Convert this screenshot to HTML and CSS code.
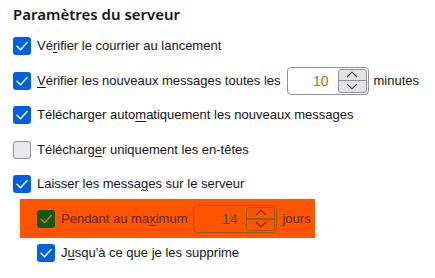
FILE: index.html
```html
<!DOCTYPE html>
<html lang="fr">
<head>
<meta charset="utf-8">
<link rel="stylesheet" href="styles.css">
</head>
<body>
<div class="panel">
  <h1 class="title">Paramètres du serveur</h1>
  <div class="row">
    <span class="cb on"><svg viewBox="0 0 18 18"><path d="M4 9.3 L7.6 12.8 L14.2 5.4"/></svg></span>
    <span class="label">Vé<u>r</u>ifier le courrier au lancement</span>
  </div>
  <div class="row">
    <span class="cb on"><svg viewBox="0 0 18 18"><path d="M4 9.3 L7.6 12.8 L14.2 5.4"/></svg></span>
    <span class="label"><u>V</u>érifier les nouveaux messages toutes les</span>
    <span class="num">
      <span class="val">10</span>
      <span class="spin">
        <span class="btn"><svg viewBox="0 0 12 7"><path d="M1 6 L6 1.2 L11 6"/></svg></span>
        <span class="btn"><svg viewBox="0 0 12 7"><path d="M1 1 L6 5.8 L11 1"/></svg></span>
      </span>
    </span>
    <span class="label">minutes</span>
  </div>
  <div class="row">
    <span class="cb on"><svg viewBox="0 0 18 18"><path d="M4 9.3 L7.6 12.8 L14.2 5.4"/></svg></span>
    <span class="label">Télécharger auto<u>m</u>atiquement les nouveaux messages</span>
  </div>
  <div class="row">
    <span class="cb off"></span>
    <span class="label">Télécharg<u>e</u>r uniquement les en-têtes</span>
  </div>
  <div class="row">
    <span class="cb on"><svg viewBox="0 0 18 18"><path d="M4 9.3 L7.6 12.8 L14.2 5.4"/></svg></span>
    <span class="label">Laisser les messa<u>g</u>es sur le serveur</span>
  </div>
  <div class="row hl">
    <span class="cb hlcb"><svg viewBox="0 0 18 18"><path d="M4 9.3 L7.6 12.8 L14.2 5.4"/></svg></span>
    <span class="label">Pendant au ma<u>x</u>imum</span>
    <span class="num hlnum">
      <span class="val">14</span>
      <span class="spin">
        <span class="btn"><svg viewBox="0 0 12 7"><path d="M1 6 L6 1.2 L11 6"/></svg></span>
        <span class="btn"><svg viewBox="0 0 12 7"><path d="M1 1 L6 5.8 L11 1"/></svg></span>
      </span>
    </span>
    <span class="label">jours</span>
  </div>
  <div class="row sub">
    <span class="cb on"><svg viewBox="0 0 18 18"><path d="M4 9.3 L7.6 12.8 L14.2 5.4"/></svg></span>
    <span class="label">J<u>u</u>squ'à ce que je les supprime</span>
  </div>
</div>
</body>
</html>
```
FILE: styles.css
```css
html, body {
  margin: 0;
  padding: 0;
  background: #ffffff;
}
body {
  font-family: "Liberation Sans", Arial, sans-serif;
  font-size: 13px;
  color: #15141a;
}
.panel {
  padding: 4px 0 0 13px;
}
.title {
  margin: 0;
  font-family: "Noto Sans", "Open Sans", sans-serif;
  font-size: 15px;
  font-weight: 600;
  line-height: 20px;
  height: 24.75px;
}
.row {
  display: flex;
  align-items: center;
  height: 34.5px;
}
.label {
  white-space: nowrap;
  line-height: 18px;
  flex: none;
}
.label u {
  text-decoration-thickness: 1px;
  text-underline-offset: 2px;
}
.cb {
  width: 18px;
  height: 18px;
  box-sizing: border-box;
  border-radius: 3px;
  margin-right: 6px;
  flex: none;
  display: flex;
}
.cb svg {
  width: 18px;
  height: 18px;
}
.cb path {
  fill: none;
  stroke: #ffffff;
  stroke-width: 1.4;
  stroke-linecap: round;
  stroke-linejoin: round;
}
.cb.on {
  background: #0061e0;
}
.cb.off {
  background: #e9e9ed;
  border: 1px solid #8f8f9d;
}
.num {
  display: flex;
  align-items: center;
  width: 82px;
  height: 28px;
  box-sizing: border-box;
  border: 1px solid #8f8f9d;
  border-radius: 4px;
  margin: 0 5px 0 6px;
  padding: 1px 1px 1px 0;
  flex: none;
  font-size: 14px;
}
.val {
  flex: 1;
  text-align: right;
  padding-right: 9px;
  color: #c06a14;
}
.spin {
  width: 29px;
  height: 24px;
  display: flex;
  flex-direction: column;
  border: 1px solid #8f8f9d;
  border-radius: 3px;
  box-sizing: border-box;
  background: #e3e3e6;
  overflow: hidden;
}
.btn {
  flex: 1;
  display: flex;
  align-items: center;
  justify-content: center;
}
.btn + .btn {
  border-top: 1.5px solid #8f8f9d;
}
.btn svg {
  width: 12px;
  height: 7px;
}
.btn path {
  fill: none;
  stroke: #3a3a40;
  stroke-width: 1.1;
}
.hl {
  margin: -2.25px 0 -2.25px 7px;
  height: 39px;
  width: 295px;
  box-sizing: border-box;
  padding-left: 17px;
  background: #ff5500;
  color: #5c2800;
}
.hl .cb.hlcb {
  background: #0d5c0d;
}
.hl .cb.hlcb path {
  stroke: #e07010;
}
.hlnum {
  width: 84px;
  border-color: #9c5a12;
  margin-left: 6px;
}
.hlnum .val {
  color: #3d5800;
}
.hlnum .spin {
  background: #ff5500;
  border-color: #9c5a12;
}
.hlnum .btn + .btn {
  border-top: 2px solid #9c5a12;
}
.hlnum .btn path {
  stroke: #6a3000;
}
.sub {
  padding-left: 24px;
}
```
